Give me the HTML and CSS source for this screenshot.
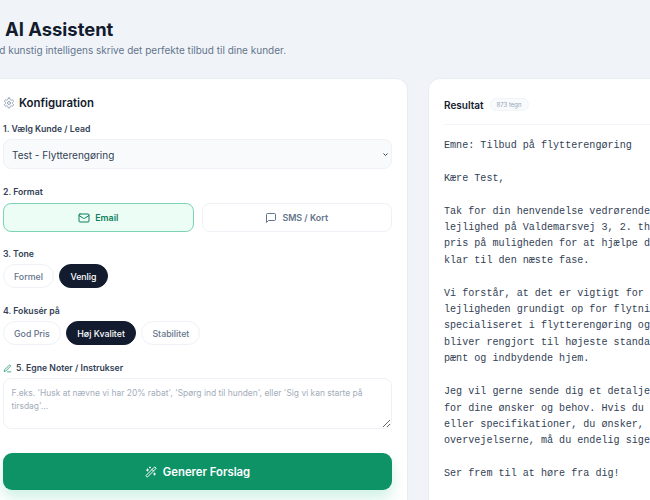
FILE: index.html
```html
<!DOCTYPE html>
<html lang="en">
<head>
    <meta charset="UTF-8">
    <meta name="viewport" content="width=device-width, initial-scale=1.0">
    <title>AI Assistent</title>
    <link rel="stylesheet" href="styles.css">
</head>
<body>
    <div class="page">
        <header class="pageHeader">
            <h1>AI Assistent</h1>
            <p>Lad kunstig intelligens skrive det perfekte tilbud til dine kunder.</p>
        </header>

        <div class="columns">
            <section class="card configCard">
                <h2 class="cardTitle">
                    <svg class="icon gearIcon" viewBox="0 0 24 24"><path d="M12.22 2h-.44a2 2 0 0 0-2 2v.18a2 2 0 0 1-1 1.73l-.43.25a2 2 0 0 1-2 0l-.15-.08a2 2 0 0 0-2.73.73l-.22.38a2 2 0 0 0 .73 2.73l.15.1a2 2 0 0 1 1 1.72v.51a2 2 0 0 1-1 1.74l-.15.09a2 2 0 0 0-.73 2.73l.22.38a2 2 0 0 0 2.73.73l.15-.08a2 2 0 0 1 2 0l.43.25a2 2 0 0 1 1 1.73V20a2 2 0 0 0 2 2h.44a2 2 0 0 0 2-2v-.18a2 2 0 0 1 1-1.73l.43-.25a2 2 0 0 1 2 0l.15.08a2 2 0 0 0 2.73-.73l.22-.39a2 2 0 0 0-.73-2.73l-.15-.08a2 2 0 0 1-1-1.74v-.5a2 2 0 0 1 1-1.74l.15-.09a2 2 0 0 0 .73-2.73l-.22-.38a2 2 0 0 0-2.73-.73l-.15.08a2 2 0 0 1-2 0l-.43-.25a2 2 0 0 1-1-1.73V4a2 2 0 0 0-2-2z"/><circle cx="12" cy="12" r="3"/></svg>
                    Konfiguration
                </h2>

                <div class="field">
                    <label class="fieldLabel">1. Vælg Kunde / Lead</label>
                    <div class="selectWrap">
                        <select class="leadSelect">
                            <option>Test - Flytterengøring</option>
                        </select>
                        <svg class="selectArrow" viewBox="0 0 10 6"><path d="M1 1l4 4 4-4"/></svg>
                    </div>
                </div>

                <div class="field">
                    <label class="fieldLabel">2. Format</label>
                    <div class="formatRow">
                        <button class="formatButton formatActive">
                            <svg class="icon" viewBox="0 0 24 24"><rect x="2" y="4" width="20" height="16" rx="2"/><path d="m22 7-8.97 5.7a1.94 1.94 0 0 1-2.06 0L2 7"/></svg>
                            Email
                        </button>
                        <button class="formatButton">
                            <svg class="icon" viewBox="0 0 24 24"><path d="M21 15a2 2 0 0 1-2 2H7l-4 4V5a2 2 0 0 1 2-2h14a2 2 0 0 1 2 2z"/></svg>
                            SMS / Kort
                        </button>
                    </div>
                </div>

                <div class="field toneField">
                    <label class="fieldLabel">3. Tone</label>
                    <div class="pillRow">
                        <button class="pill">Formel</button>
                        <button class="pill pillActive">Venlig</button>
                    </div>
                </div>

                <div class="field">
                    <label class="fieldLabel">4. Fokusér på</label>
                    <div class="pillRow">
                        <button class="pill">God Pris</button>
                        <button class="pill pillActive">Høj Kvalitet</button>
                        <button class="pill">Stabilitet</button>
                    </div>
                </div>

                <div class="field">
                    <label class="fieldLabel notesLabel">
                        <svg class="icon penIcon" viewBox="0 0 24 24"><path d="M12 21h9"/><path d="M16.5 3.5a2.12 2.12 0 0 1 3 3L7 19l-4 1 1-4Z"/></svg>
                        5. Egne Noter / Instrukser
                    </label>
                    <textarea class="notes" placeholder="F.eks. 'Husk at nævne vi har 20% rabat', 'Spørg ind til hunden', eller 'Sig vi kan starte på tirsdag'..."></textarea>
                </div>

                <button class="generateButton">
                    <svg class="icon wandIcon" viewBox="0 0 24 24"><path d="m21.64 3.64-1.28-1.28a1.21 1.21 0 0 0-1.72 0L2.36 18.64a1.21 1.21 0 0 0 0 1.72l1.28 1.28a1.2 1.2 0 0 0 1.72 0L21.64 5.36a1.2 1.2 0 0 0 0-1.72Z"/><path d="m14 7 3 3"/><path d="M5 6v4"/><path d="M19 14v4"/><path d="M10 2v2"/><path d="M7 8H3"/><path d="M21 16h-4"/><path d="M11 3H9"/></svg>
                    Generer Forslag
                </button>
            </section>

            <section class="card resultCard">
                <div class="resultHeader">
                    <h2 class="resultTitle">Resultat</h2>
                    <span class="charCount">873 tegn</span>
                </div>
                <pre class="resultText">Emne: Tilbud på flytterengøring

Kære Test,

Tak for din henvendelse vedrørende flytterengøring af din
lejlighed på Valdemarsvej 3, 2. th. Vi sætter stor
pris på muligheden for at hjælpe dig med at gøre boligen
klar til den næste fase.

Vi forstår, at det er vigtigt for dig at få
lejligheden grundigt op for flytning. Vi er
specialiseret i flytterengøring og sikrer, at alt
bliver rengjort til højeste standard, så du kan aflevere et
pænt og indbydende hjem.

Jeg vil gerne sende dig et detaljeret tilbud, der er tilpasset
for dine ønsker og behov. Hvis du har spørgsmål
eller specifikationer, du ønsker, at vi tager med i
overvejelserne, må du endelig sige til.

Ser frem til at høre fra dig!</pre>
            </section>
        </div>
    </div>
</body>
</html>
```

FILE: styles.css
```css
html, body {
    margin: 0;
    padding: 0;
    height: 100%;
    overflow: hidden;
}

body {
    font-family: 'Inter', 'Liberation Sans', sans-serif;
    background: #f0f4f9;
    color: #0f172a;
}

.page {
    width: 700px;
    margin-left: -13px;
    padding-top: 18px;
}

.pageHeader h1 {
    margin: 0 0 0 18px;
    font-size: 18.4px;
    line-height: 22px;
    font-weight: 700;
    color: #131b2e;
}

.pageHeader p {
    margin: 2px 0 0 1px;
    font-size: 10px;
    line-height: 16px;
    color: #64748b;
}

.columns {
    display: flex;
    gap: 20px;
    margin-top: 20px;
    align-items: flex-start;
}

.card {
    background: #ffffff;
    border: 1px solid #e8edf3;
    border-radius: 12px;
    box-sizing: border-box;
}

.configCard {
    width: 421px;
    flex-shrink: 0;
    height: 500px;
    padding: 14px 15px 0 15px;
}

.resultCard {
    flex: 1;
    height: 500px;
    padding: 0 15px;
}

.cardTitle {
    display: flex;
    align-items: center;
    gap: 4px;
    margin: 0;
    height: 20px;
    font-size: 11.4px;
    font-weight: 600;
    color: #131b2e;
}

.icon {
    width: 12px;
    height: 12px;
    flex-shrink: 0;
    fill: none;
    stroke: currentColor;
    stroke-width: 2;
    stroke-linecap: round;
    stroke-linejoin: round;
}

.gearIcon {
    color: #94a3b8;
}

.field {
    margin-top: 9px;
}

.field + .field {
    margin-top: 16px;
}

.field + .toneField {
    margin-top: 15px;
}

.fieldLabel {
    display: block;
    height: 14px;
    margin-bottom: 3px;
    font-size: 8.7px;
    line-height: 14px;
    font-weight: 600;
    color: #334155;
}

.selectWrap {
    position: relative;
}

.leadSelect {
    display: block;
    width: 100%;
    height: 30px;
    padding: 2px 8px 0 8px;
    font-family: 'Inter', 'Liberation Sans', sans-serif;
    font-size: 10px;
    color: #334155;
    background: #f8fafc;
    border: 1px solid #eef2f6;
    border-radius: 8px;
    appearance: none;
}

.selectArrow {
    position: absolute;
    top: 14px;
    right: 4px;
    width: 5px;
    height: 3px;
    fill: none;
    stroke: #334155;
    stroke-width: 2;
}

.formatRow {
    display: flex;
    gap: 8px;
    margin-top: 4px;
}

.formatButton {
    flex: 1;
    display: flex;
    justify-content: center;
    align-items: center;
    gap: 5px;
    height: 29px;
    padding: 0;
    font-family: 'Inter', 'Liberation Sans', sans-serif;
    font-size: 8.9px;
    font-weight: 600;
    color: #64748b;
    background: #ffffff;
    border: 1px solid #eef2f6;
    border-radius: 8px;
}

.formatActive {
    color: #0f7f5c;
    background: #ecfdf5;
    border-color: #7dd3b5;
}

.pillRow {
    display: flex;
    gap: 5.5px;
}

.pill {
    height: 24px;
    padding: 0 10px;
    font-family: 'Inter', 'Liberation Sans', sans-serif;
    font-size: 8.8px;
    font-weight: 500;
    color: #64748b;
    background: #ffffff;
    border: 1px solid #eef2f6;
    border-radius: 12px;
}

.pillActive {
    color: #ffffff;
    background: #131b2e;
    border-color: #131b2e;
}

.notesLabel {
    display: flex;
    align-items: center;
    gap: 4px;
}

.penIcon {
    width: 9px;
    height: 9px;
    color: #10916a;
}

.notes {
    display: block;
    box-sizing: border-box;
    width: 100%;
    height: 51px;
    padding: 8px 7.5px;
    font-family: 'Inter', 'Liberation Sans', sans-serif;
    font-size: 8.45px;
    line-height: 13px;
    color: #334155;
    background: #ffffff;
    border: 1px solid #eef2f6;
    border-radius: 8px;
}

.notes::placeholder {
    color: #a3adba;
}

.generateButton {
    display: flex;
    justify-content: center;
    align-items: center;
    gap: 6px;
    width: 100%;
    height: 37px;
    margin-top: 24px;
    font-family: 'Inter', 'Liberation Sans', sans-serif;
    font-size: 11.3px;
    font-weight: 600;
    color: #ffffff;
    background: #0e9367;
    border: none;
    border-radius: 9px;
    box-shadow: 0 8px 14px rgba(16, 185, 129, 0.2);
}

.wandIcon {
    width: 12px;
    height: 12px;
}

.resultHeader {
    display: flex;
    align-items: center;
    gap: 6px;
    box-sizing: border-box;
    height: 46px;
    padding-top: 6px;
    border-bottom: 1px solid #f1f5f9;
}

.resultTitle {
    margin: 0;
    font-size: 10px;
    font-weight: 600;
    color: #131b2e;
}

.charCount {
    padding: 2px 6px;
    font-size: 6px;
    color: #94a3b8;
    background: #f8fafc;
    border: 1px solid #f1f5f9;
    border-radius: 8px;
}

.resultText {
    margin: 13px 0 0 0;
    font-family: 'Liberation Mono', monospace;
    font-size: 10.1px;
    line-height: 16.4px;
    color: #334155;
}
```
